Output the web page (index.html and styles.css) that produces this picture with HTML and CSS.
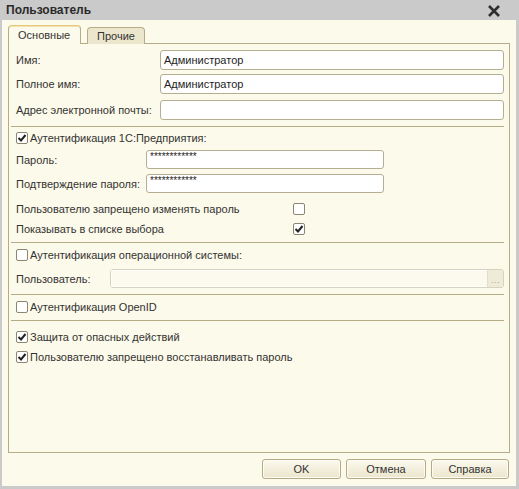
FILE: index.html
```html
<!DOCTYPE html>
<html lang="ru">
<head>
<meta charset="utf-8">
<title>Пользователь</title>
<link rel="stylesheet" href="styles.css">
</head>
<body>
<div class="window">
  <div class="titlebar">
    <span class="title">Пользователь</span>
    <svg class="close" width="14" height="12" viewBox="0 0 14 12"><path d="M2 1 L12 11 M12 1 L2 11" stroke="#2e2e2e" stroke-width="2.6" stroke-linecap="butt"/></svg>
  </div>
  <div class="client">
    <div class="tabs">
      <div class="tab active">Основные</div>
      <div class="tab">Прочие</div>
    </div>
    <div class="panel">
      <div class="row r1"><span class="label w1">Имя:</span><div class="input">Администратор</div></div>
      <div class="row r2"><span class="label w1">Полное имя:</span><div class="input">Администратор</div></div>
      <div class="row r3"><span class="label w1">Адрес электронной почты:</span><div class="input"></div></div>
      <div class="sep s1"></div>
      <div class="row cbrow c1"><span class="cb checked"><svg width="10" height="10" viewBox="0 0 10 10"><path d="M1.5 5 L4 7.5 L8.5 2" fill="none" stroke="#222" stroke-width="2"/></svg></span><span>Аутентификация 1С:Предприятия:</span></div>
      <div class="row p1"><span class="label w2">Пароль:</span><div class="input pwd">************</div></div>
      <div class="row p2"><span class="label w2">Подтверждение пароля:</span><div class="input pwd">************</div></div>
      <div class="row cbrow c2"><span class="label w3">Пользователю запрещено изменять пароль</span><span class="cb"></span></div>
      <div class="row cbrow"><span class="label w3">Показывать в списке выбора</span><span class="cb checked"><svg width="10" height="10" viewBox="0 0 10 10"><path d="M1.5 5 L4 7.5 L8.5 2" fill="none" stroke="#222" stroke-width="2"/></svg></span></div>
      <div class="sep s2"></div>
      <div class="row cbrow c3"><span class="cb"></span><span>Аутентификация операционной системы:</span></div>
      <div class="row u1"><span class="label w4">Пользователь:</span><div class="input disabled"><div class="dtext"></div><div class="dots">...</div></div></div>
      <div class="sep s3"></div>
      <div class="row cbrow c4"><span class="cb"></span><span>Аутентификация OpenID</span></div>
      <div class="sep s4"></div>
      <div class="row cbrow c5"><span class="cb checked"><svg width="10" height="10" viewBox="0 0 10 10"><path d="M1.5 5 L4 7.5 L8.5 2" fill="none" stroke="#222" stroke-width="2"/></svg></span><span>Защита от опасных действий</span></div>
      <div class="row cbrow"><span class="cb checked"><svg width="10" height="10" viewBox="0 0 10 10"><path d="M1.5 5 L4 7.5 L8.5 2" fill="none" stroke="#222" stroke-width="2"/></svg></span><span>Пользователю запрещено восстанавливать пароль</span></div>
    </div>
    <div class="buttons">
      <div class="btn b-ok">OK</div>
      <div class="btn b-cancel">Отмена</div>
      <div class="btn b-help">Справка</div>
    </div>
  </div>
</div>
</body>
</html>
```
FILE: styles.css
```css
html, body {
  margin: 0;
  padding: 0;
}
body {
  background: #cacaca;
  font-family: "Liberation Sans", Arial, sans-serif;
  font-size: 11px;
  color: #333333;
}
.window {
  width: 519px;
  height: 489px;
  display: flex;
  flex-direction: column;
  background: #cacaca;
}
.titlebar {
  height: 20px;
  flex: none;
  display: flex;
  align-items: center;
  justify-content: space-between;
  padding: 0 18px 0 6px;
}
.title {
  font-weight: bold;
  font-size: 12px;
  color: #2a2a2a;
}
.close {
  display: block;
  margin-top: 1px;
}
.client {
  flex: 1;
  margin: 0 3px 3px 2px;
  background: #fcfaea;
  padding: 6px 6px 0 6px;
  display: flex;
  flex-direction: column;
}
.tabs {
  display: flex;
  align-items: flex-end;
  height: 18px;
  gap: 6px;
  position: relative;
  z-index: 1;
}
.tab {
  height: 16px;
  line-height: 16px;
  padding: 0 9px;
  border: 1px solid #b6ad88;
  border-bottom: none;
  border-radius: 4px 4px 0 0;
  background: #ece6cc;
  color: #333;
  white-space: nowrap;
}
.tab.active {
  height: 18px;
  line-height: 19px;
  width: 53px;
  background: #fcfaea;
  border-top: 1px solid #e6c978;
  box-shadow: inset 0 1px 0 #f3e3b0;
}
.tab:nth-child(2) {
  width: 38px;
}
.panel {
  height: 408px;
  border: 1px solid #b6ad88;
  margin-top: -1px;
  padding: 0 5px 0 7px;
  display: flex;
  flex-direction: column;
}
.row {
  display: flex;
  align-items: center;
  height: 20px;
  flex: none;
  white-space: nowrap;
}
.label {
  flex: none;
}
.w1 { width: 144px; }
.w2 { width: 130px; }
.w3 { width: 275px; }
.w4 { width: 94px; }
.r1 { margin-top: 6px; }
.r2 { margin-top: 4px; }
.r3 { margin-top: 6px; }
.input {
  flex: 1;
  height: 18px;
  border: 1px solid #b5ae90;
  border-radius: 3px;
  background: #ffffff;
  padding-left: 3px;
  line-height: 18px;
  color: #1e1e1e;
  box-sizing: content-box;
}
.p1, .p2 { height: 19px; }
.p1 { margin-top: 2px; }
.p2 { margin-top: 5px; }
.pwd {
  flex: none;
  width: 233px;
  height: 17px;
  line-height: 12px;
  font-size: 10px;
}
.sep {
  height: 1px;
  background: #b6ad88;
  flex: none;
  margin-left: -5px;
}
.s1 { margin-top: 6px; }
.s2 { margin-top: 3px; }
.s3 { margin-top: 6px; }
.s4 { margin-top: 3px; }
.c1 { margin-top: 1px; }
.c2 { margin-top: 6px; }
.c3 { margin-top: 2px; }
.c4 { margin-top: 2px; }
.c5 { margin-top: 6px; }
.u1 { margin-top: 4px; height: 19px; }
.cbrow { gap: 2px; }
.cb {
  width: 10px;
  height: 10px;
  border: 1px solid #8c8670;
  border-radius: 2px;
  background: #ffffff;
  display: flex;
  align-items: center;
  justify-content: center;
  flex: none;
}
.cb svg { display: block; }
.disabled {
  padding: 0;
  display: flex;
  height: 17px;
  border-color: #d8d3bd;
  background: #fcfaee;
  overflow: hidden;
}
.dtext {
  flex: 1;
  border: 1px solid #ffffff;
  border-right: none;
}
.dots {
  width: 15px;
  border-left: 1px solid #e4dfc8;
  background: #efebd9;
  color: #a8a48f;
  font-size: 9px;
  line-height: 20px;
  text-align: center;
  letter-spacing: 0.5px;
}
.buttons {
  display: flex;
  justify-content: flex-end;
  gap: 5px;
  margin-top: 6px;
  padding-right: 1px;
}
.btn {
  height: 18px;
  line-height: 18px;
  border: 1px solid #b4ab86;
  border-radius: 3px;
  background: linear-gradient(#fbf9ee, #ece6cd);
  text-align: center;
  color: #333;
  box-shadow: inset 0 0 0 1px #fdfbf3;
}
.b-ok { width: 77px; }
.b-cancel { width: 78px; }
.b-help { width: 76px; }
```
